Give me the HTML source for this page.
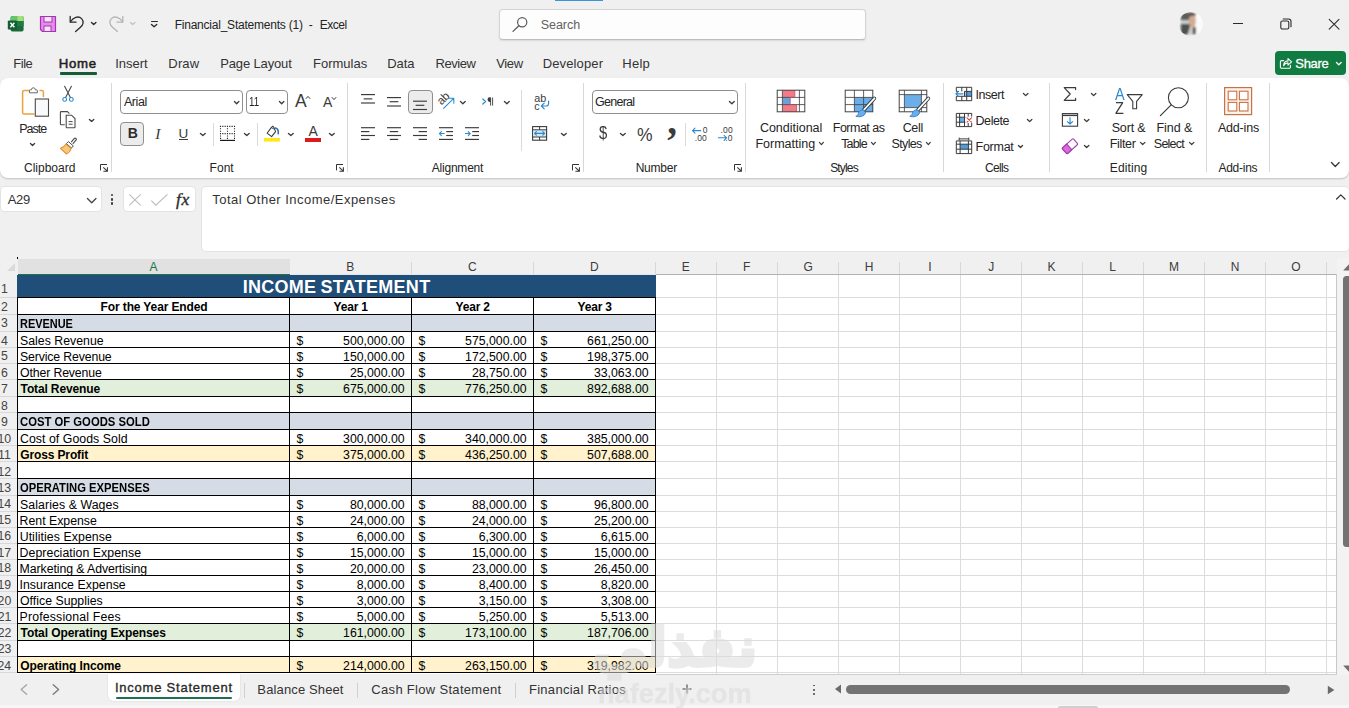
<!DOCTYPE html><html><head><meta charset="utf-8"><title>Financial_Statements (1) - Excel</title><style>
*{box-sizing:border-box;margin:0;padding:0}
html,body{width:1349px;height:708px;overflow:hidden;background:#f0f0f0;font-family:"Liberation Sans",sans-serif;color:#242424}
body{position:relative}
.abs{position:absolute}
.t{position:absolute;white-space:nowrap;line-height:1}
.ui{font-size:12px;color:#242424}
#ribbon{position:absolute;left:0;top:78px;width:1349px;height:99.5px;background:#fff;border-radius:8px;box-shadow:0 1px 2px rgba(0,0,0,.2)}
.sep{position:absolute;width:1px;background:#d6d6d6}
.cell{position:absolute;font-size:12.3px;line-height:1;white-space:nowrap;color:#000}
.b{font-weight:bold}
.hl{position:absolute;height:1px;background:#000}
.vl{position:absolute;width:1px;background:#000}
.gl{position:absolute;background:#dcdcdc}
.rh{position:absolute;font-size:13px;color:#3b3b3b;line-height:1;white-space:nowrap;text-align:center;width:30px;left:-9px}
.ch{position:absolute;font-size:12.5px;color:#3b3b3b;line-height:1;white-space:nowrap;text-align:center;top:260px}
</style></head><body>
<div class="abs" style="left:555px;top:0px;width:48px;height:1px;background:#3a96d6"></div>
<svg class="abs" style="left:7px;top:15px;" width="18" height="18" viewBox="0 0 18 18"><rect x="3.600" y="1" width="13" height="15.600" rx="1.800" fill="#1a6a3a"/><path d="M3.600 2.800A1.800 1.800 0 0 1 5.400 1H10.200V6H3.600Z" fill="#63c56c"/><path d="M10.200 1H14.800A1.800 1.800 0 0 1 16.600 2.800V6H10.200Z" fill="#a2e07c"/><rect x="10.200" y="6" width="6.400" height="5" fill="#1f7a43"/><rect x="0.800" y="5.400" width="9.200" height="9.200" rx="1.200" fill="#155d33"/><path d="M3.400 7.700L7.400 12.300M7.400 7.700L3.400 12.300" stroke="#fff" stroke-width="1.400" fill="none"/></svg>
<svg class="abs" style="left:39px;top:15px;" width="18" height="18" viewBox="0 0 18 18"><path d="M1.5 1.5H16.5V16.5H3.5L1.5 14.5Z" fill="#e58be8" stroke="#a334b4" stroke-width="1.2" stroke-linejoin="round"/><rect x="5" y="1.5" width="8" height="5.5" fill="#fbe4fb" stroke="#a334b4" stroke-width="1"/><rect x="5" y="11" width="7" height="5.5" fill="#fbe4fb" stroke="#a334b4" stroke-width="1"/></svg>
<svg class="abs" style="left:68px;top:14px;" width="18" height="20" viewBox="0 0 18 20"><path d="M2.2 2.5V8.2H8" fill="none" stroke="#2b2b2b" stroke-width="1.3" stroke-linecap="round" stroke-linejoin="round"/><path d="M2.6 7.8C5 3.2 10.5 1.5 13.6 4.6C16.4 7.6 15 11.2 12.2 13.6L7.6 17.6" fill="none" stroke="#2b2b2b" stroke-width="1.3" stroke-linecap="round"/></svg>
<svg class="abs" style="left:90.00px;top:20.80px" width="7.40" height="4.80"><path d="M1.49 1.49L3.70 3.51L5.91 1.49" fill="none" stroke="#2b2b2b" stroke-width="1.4" stroke-linecap="round" stroke-linejoin="round"/></svg>
<svg class="abs" style="left:107px;top:14px;" width="18" height="20" viewBox="0 0 18 20"><path d="M15.8 2.5V8.2H10" fill="none" stroke="#b4b4b4" stroke-width="1.3" stroke-linecap="round" stroke-linejoin="round"/><path d="M15.4 7.8C13 3.2 7.5 1.5 4.4 4.6C1.6 7.6 3 11.2 5.800 13.6L10.4 17.6" fill="none" stroke="#b4b4b4" stroke-width="1.3" stroke-linecap="round"/></svg>
<svg class="abs" style="left:129.00px;top:20.80px" width="7.40" height="4.80"><path d="M1.49 1.49L3.70 3.51L5.91 1.49" fill="none" stroke="#c4c4c4" stroke-width="1.4" stroke-linecap="round" stroke-linejoin="round"/></svg>
<div class="abs" style="left:151px;top:20.6px;width:7px;height:1.2999999999999972px;background:#2b2b2b;border-radius:1px"></div>
<svg class="abs" style="left:150.40px;top:22.60px" width="8.20" height="5.00"><path d="M1.49 1.49L4.10 3.71L6.71 1.49" fill="none" stroke="#2b2b2b" stroke-width="1.4" stroke-linecap="round" stroke-linejoin="round"/></svg>
<div class="t" style="left:174.64px;top:19.00px;font-size:12px;letter-spacing:-0.220px;color:#242424;">Financial_Statements (1)</div>
<div class="t" style="left:308.72px;top:19.00px;font-size:12px;letter-spacing:0.000px;color:#242424;">-</div>
<div class="t" style="left:319.64px;top:19.00px;font-size:12px;letter-spacing:-0.440px;color:#242424;">Excel</div>
<div class="abs" style="left:498.8px;top:9px;width:367.7px;height:30.5px;background:#fdfdfd;border:1px solid #d4d4d4;border-bottom-color:#bdbdbd;border-radius:4px;box-shadow:0 1px 2px rgba(0,0,0,.10)"></div>
<svg class="abs" style="left:511px;top:16px;" width="18" height="17" viewBox="0 0 18 17"><circle cx="11.2" cy="6.3" r="4.6" fill="none" stroke="#5a5a5a" stroke-width="1.2"/><path d="M7.9 9.7L2 15.4" stroke="#5a5a5a" stroke-width="1.3" stroke-linecap="round"/></svg>
<div class="t" style="left:540.84px;top:19.00px;font-size:12.5px;letter-spacing:-0.070px;color:#616161;">Search</div>
<svg class="abs" style="left:1178px;top:11px;" width="26" height="26" viewBox="0 0 26 26"><defs><clipPath id="avc"><circle cx="12.700" cy="13" r="12"/></clipPath><filter id="avb" x="-20%" y="-20%" width="140%" height="140%"><feGaussianBlur stdDeviation="1.100"/></filter></defs><circle cx="12.700" cy="13" r="12" fill="#fafafa"/><g clip-path="url(#avc)"><g filter="url(#avb)"><rect x="2" y="1" width="16" height="24" fill="#f4f4f2"/><rect x="2.600" y="1.400" width="12.400" height="8.400" fill="#5c5b58"/><rect x="2.600" y="9.400" width="8.600" height="3.800" fill="#d3d8d4"/><rect x="2.600" y="12.800" width="9.600" height="11.200" fill="#4b514d"/><ellipse cx="14.400" cy="10" rx="3.600" ry="6.400" fill="#d2aa92"/><rect x="11.600" y="2" width="6.200" height="2.600" fill="#3e3632"/><path d="M9.400 24L11.600 17.400L15.400 16.400L15.800 24Z" fill="#d2d2ce"/><rect x="14.800" y="16" width="3.200" height="7.400" fill="#3d3a36"/><rect x="17.800" y="0" width="8" height="26" fill="#fbfbfb"/></g></g></svg>
<div class="abs" style="left:1233px;top:22.5px;width:10px;height:1.1999999999999993px;background:#2b2b2b"></div>
<svg class="abs" style="left:1279px;top:17px;" width="14" height="14" viewBox="0 0 14 14"><rect x="1.8" y="4" width="8" height="8" rx="1.6" fill="none" stroke="#2b2b2b" stroke-width="1.1"/><path d="M4.2 2H9.6A2.4 2.4 0 0 1 12 4.400V9.800" fill="none" stroke="#2b2b2b" stroke-width="1.1" stroke-linecap="round"/></svg>
<svg class="abs" style="left:1327px;top:17px;" width="14" height="14" viewBox="0 0 14 14"><path d="M2.200 2.300L12 12.100M12 2.300L2.200 12.100" stroke="#2b2b2b" stroke-width="1.050" stroke-linecap="round"/></svg>
<div class="t" style="left:13.36px;top:57.00px;font-size:13px;letter-spacing:-0.490px;color:#333;">File</div>
<div class="t" style="left:115.23px;top:57.00px;font-size:13px;letter-spacing:-0.006px;color:#333;">Insert</div>
<div class="t" style="left:168.36px;top:57.00px;font-size:13px;letter-spacing:0.128px;color:#333;">Draw</div>
<div class="t" style="left:220.26px;top:57.00px;font-size:13px;letter-spacing:-0.145px;color:#333;">Page Layout</div>
<div class="t" style="left:313.06px;top:57.00px;font-size:13px;letter-spacing:-0.002px;color:#333;">Formulas</div>
<div class="t" style="left:387.16px;top:57.00px;font-size:13px;letter-spacing:-0.018px;color:#333;">Data</div>
<div class="t" style="left:435.56px;top:57.00px;font-size:13px;letter-spacing:-0.440px;color:#333;">Review</div>
<div class="t" style="left:496.30px;top:57.00px;font-size:13px;letter-spacing:-0.383px;color:#333;">View</div>
<div class="t" style="left:542.66px;top:57.00px;font-size:13px;letter-spacing:0.132px;color:#333;">Developer</div>
<div class="t" style="left:622.36px;top:57.00px;font-size:13px;letter-spacing:0.248px;color:#333;">Help</div>
<div class="t" style="left:58.84px;top:57.00px;font-size:13.2px;letter-spacing:0.702px;color:#1f1f1f;-webkit-text-stroke:0.55px #1f1f1f;">Home</div>
<div class="abs" style="left:59.5px;top:72.4px;width:37.0px;height:2.1999999999999886px;background:#185c37;border-radius:1px"></div>
<div class="abs" style="left:1275px;top:51px;width:71px;height:24px;background:#107c41;border-radius:4px"></div>
<svg class="abs" style="left:1279px;top:56px;" width="14" height="14" viewBox="0 0 14 14"><path d="M4.6 4.6H2.6A1.2 1.2 0 0 0 1.400 5.800V11A1.2 1.2 0 0 0 2.600 12.200H10.2A1.2 1.2 0 0 0 11.400 11V9.400" fill="none" stroke="#fff" stroke-width="1.1" stroke-linecap="round"/><path d="M4.6 9.6C4.800 6.600 6.600 5 9.000 4.900V2.600L12.600 5.900L9.000 9.200V6.900C7.200 6.900 5.800 7.700 4.600 9.600Z" fill="none" stroke="#fff" stroke-width="1.1" stroke-linejoin="round"/></svg>
<div class="t" style="left:1295.32px;top:57.00px;font-size:13px;letter-spacing:-0.335px;color:#fff;-webkit-text-stroke:0.3px #fff;">Share</div>
<svg class="abs" style="left:1334.80px;top:60.80px" width="7.60" height="5.00"><path d="M1.46 1.46L3.80 3.73L6.15 1.46" fill="none" stroke="#fff" stroke-width="1.3" stroke-linecap="round" stroke-linejoin="round"/></svg>
<div id="ribbon"></div>
<div class="abs" style="left:111.3px;top:83px;width:1.0px;height:89px;background:#d8d8d8"></div>
<div class="abs" style="left:347.0px;top:83px;width:1.0px;height:89px;background:#d8d8d8"></div>
<div class="abs" style="left:582.8px;top:83px;width:1.0px;height:89px;background:#d8d8d8"></div>
<div class="abs" style="left:745.2px;top:83px;width:1.0px;height:89px;background:#d8d8d8"></div>
<div class="abs" style="left:942.8px;top:83px;width:1.0px;height:89px;background:#d8d8d8"></div>
<div class="abs" style="left:1048.9px;top:83px;width:1.0px;height:89px;background:#d8d8d8"></div>
<div class="abs" style="left:1206.0px;top:83px;width:1.0px;height:89px;background:#d8d8d8"></div>
<div class="abs" style="left:1269.0px;top:83px;width:1.0px;height:89px;background:#d8d8d8"></div>
<svg class="abs" style="left:20px;top:86px;" width="32" height="34" viewBox="0 0 32 34"><path d="M10 4.600H4.200A1.600 1.600 0 0 0 2.600 6.200V26.400A1.600 1.600 0 0 0 4.200 28H14.500" fill="none" stroke="#e8a33d" stroke-width="1.5"/><path d="M19.500 4.600H21.800A1.600 1.600 0 0 1 23.400 6.200V11" fill="none" stroke="#e8a33d" stroke-width="1.5"/><path d="M9.400 6.800V4.800A1 1 0 0 1 10.400 3.800H11.400A2 2 0 0 1 15.400 3.800H16.400A1 1 0 0 1 17.400 4.800V6.800Z" fill="#fff" stroke="#6a6a6a" stroke-width="1"/><rect x="15.300" y="13" width="13.200" height="17.200" fill="#fafafa" stroke="#4a4a4a" stroke-width="1.1"/></svg>
<div class="t" style="left:19.30px;top:123.00px;font-size:12.5px;letter-spacing:-1.034px;color:#242424;">Paste</div>
<svg class="abs" style="left:29.20px;top:142.20px" width="7.00" height="4.80"><path d="M1.46 1.46L3.50 3.53L5.55 1.46" fill="none" stroke="#3b3b3b" stroke-width="1.3" stroke-linecap="round" stroke-linejoin="round"/></svg>
<svg class="abs" style="left:61px;top:85px;" width="14" height="18" viewBox="0 0 14 18"><path d="M3.600 1.200L9.400 12.500M10.400 1.200L4.600 12.500" stroke="#4a4a4a" stroke-width="1.1" stroke-linecap="round"/><circle cx="3.700" cy="14.400" r="1.900" fill="none" stroke="#2a8ad0" stroke-width="1.1"/><circle cx="10.300" cy="14.400" r="1.900" fill="none" stroke="#2a8ad0" stroke-width="1.1"/></svg>
<svg class="abs" style="left:59px;top:110px;" width="18" height="19" viewBox="0 0 18 19"><path d="M5.800 14.800H2.200A0.800 0.800 0 0 1 1.400 14V2.400A0.800 0.800 0 0 1 2.200 1.600H8.400L10.400 3.600" fill="none" stroke="#4a4a4a" stroke-width="1.1"/><path d="M7.200 5.200H12.600L16 8.600V17A0.800 0.800 0 0 1 15.200 17.800H8A0.800 0.800 0 0 1 7.200 17Z" fill="#fff" stroke="#4a4a4a" stroke-width="1.1"/><path d="M9.600 11.600H13.600M9.600 14.200H13.600" stroke="#4a4a4a" stroke-width="1"/></svg>
<svg class="abs" style="left:87.60px;top:117.60px" width="7.20" height="4.80"><path d="M1.46 1.46L3.60 3.53L5.75 1.46" fill="none" stroke="#3b3b3b" stroke-width="1.3" stroke-linecap="round" stroke-linejoin="round"/></svg>
<svg class="abs" style="left:59px;top:137px;" width="18" height="18" viewBox="0 0 18 18"><path d="M12.200 5.200L15.200 1.600A1.200 1.200 0 0 1 17 3.200L13.800 6.800" fill="#fff" stroke="#4a4a4a" stroke-width="1.1"/><path d="M9.400 4.600L14.400 9L12.400 11L7.400 6.600Z" fill="#fff" stroke="#4a4a4a" stroke-width="1"/><path d="M7 7L12.200 11.600C11.400 14 9.800 16 7.600 17L1.400 11.400C3.600 10.800 5.600 9.400 7 7Z" fill="#f7c77e" stroke="#e0922f" stroke-width="1.1" stroke-linejoin="round"/></svg>
<div class="t" style="left:24.00px;top:162.00px;font-size:12px;letter-spacing:-0.005px;color:#242424;">Clipboard</div>
<svg class="abs" style="left:98.8px;top:163.2px;" width="10" height="10" viewBox="0 0 10 10"><path d="M1.500 7.400V1.500H8" fill="none" stroke="#333" stroke-width="1"/><path d="M4.300 4.300L8.300 8.100M8.400 4.200V8.200H4.400" fill="none" stroke="#333" stroke-width="1.050"/></svg>
<div class="abs" style="left:120px;top:90px;width:123px;height:24px;border:1px solid #8f8f8f;border-radius:4px;background:#fff"></div>
<div class="t" style="left:123.90px;top:96.00px;font-size:12.5px;letter-spacing:-0.413px;color:#242424;">Arial</div>
<svg class="abs" style="left:232.70px;top:99.90px" width="7.30" height="5.00"><path d="M1.46 1.46L3.65 3.73L5.85 1.46" fill="none" stroke="#3b3b3b" stroke-width="1.3" stroke-linecap="round" stroke-linejoin="round"/></svg>
<div class="abs" style="left:245.5px;top:90px;width:42.0px;height:24px;border:1px solid #8f8f8f;border-radius:4px;background:#fff"></div>
<div class="t" style="left:249.17px;top:96.00px;font-size:12.5px;color:#242424;transform:scaleX(0.7781);transform-origin:0 0;">11</div>
<svg class="abs" style="left:277.50px;top:99.90px" width="7.30" height="5.00"><path d="M1.46 1.46L3.65 3.73L5.85 1.46" fill="none" stroke="#3b3b3b" stroke-width="1.3" stroke-linecap="round" stroke-linejoin="round"/></svg>
<div class="t" style="left:295.00px;top:93.00px;font-size:17.5px;letter-spacing:0.000px;color:#3b3b3b;">A</div>
<svg class="abs" style="left:305px;top:94.6px;" width="6" height="5" viewBox="0 0 6 5"><path d="M0.800 3.800L3 1.400L5.200 3.800" fill="none" stroke="#3b3b3b" stroke-width="1"/></svg>
<div class="t" style="left:323.00px;top:95.00px;font-size:14px;letter-spacing:0.000px;color:#3b3b3b;">A</div>
<svg class="abs" style="left:331px;top:96px;" width="6" height="5" viewBox="0 0 6 5"><path d="M0.800 1.200L3 3.600L5.200 1.200" fill="none" stroke="#3b3b3b" stroke-width="1"/></svg>
<div class="abs" style="left:120px;top:122px;width:24px;height:24px;border:1px solid #8f8f8f;border-radius:4px;background:#ececec"></div>
<div class="t" style="left:127.79px;top:126.00px;font-size:14px;font-weight:bold;letter-spacing:0.000px;color:#2b2b2b;">B</div>
<div class="t" style="left:155.2px;top:126px;font-family:'Liberation Serif',serif;font-style:italic;font-size:15.5px;color:#3b3b3b">I</div>
<div class="t" style="left:178.59px;top:127.00px;font-size:13.5px;letter-spacing:0.000px;color:#3b3b3b;">U</div>
<div class="abs" style="left:179.2px;top:138.8px;width:8.800000000000011px;height:1.1999999999999886px;background:#3b3b3b"></div>
<svg class="abs" style="left:198.50px;top:131.80px" width="7.70" height="4.80"><path d="M1.46 1.46L3.85 3.53L6.24 1.46" fill="none" stroke="#3b3b3b" stroke-width="1.3" stroke-linecap="round" stroke-linejoin="round"/></svg>
<div class="abs" style="left:213.1px;top:123px;width:1.0px;height:22.5px;background:#dadada"></div>
<svg class="abs" style="left:219px;top:124px;" width="18" height="18" viewBox="0 0 18 18"><path d="M0.95 1.85h1.100v1.100h-1.100zM0.95 4.25h1.100v1.100h-1.100zM0.95 6.65h1.100v1.100h-1.100zM0.95 9.05h1.100v1.100h-1.100zM0.95 11.45h1.100v1.100h-1.100zM0.95 13.85h1.100v1.100h-1.100zM3.28 1.85h1.100v1.100h-1.100zM3.28 9.05h1.100v1.100h-1.100zM5.61 1.85h1.100v1.100h-1.100zM5.61 9.05h1.100v1.100h-1.100zM7.94 1.85h1.100v1.100h-1.100zM7.94 4.25h1.100v1.100h-1.100zM7.94 6.65h1.100v1.100h-1.100zM7.94 9.05h1.100v1.100h-1.100zM7.94 11.45h1.100v1.100h-1.100zM7.94 13.85h1.100v1.100h-1.100zM10.27 1.85h1.100v1.100h-1.100zM10.27 9.05h1.100v1.100h-1.100zM12.60 1.85h1.100v1.100h-1.100zM12.60 9.05h1.100v1.100h-1.100zM14.93 1.85h1.100v1.100h-1.100zM14.93 4.25h1.100v1.100h-1.100zM14.93 6.65h1.100v1.100h-1.100zM14.93 9.05h1.100v1.100h-1.100zM14.93 11.45h1.100v1.100h-1.100zM14.93 13.85h1.100v1.100h-1.100z" fill="#222"/><path d="M1 16.400H16" stroke="#1a1a1a" stroke-width="1.200"/></svg>
<svg class="abs" style="left:242.50px;top:131.80px" width="7.60" height="4.80"><path d="M1.46 1.46L3.80 3.53L6.14 1.46" fill="none" stroke="#3b3b3b" stroke-width="1.3" stroke-linecap="round" stroke-linejoin="round"/></svg>
<div class="abs" style="left:256.8px;top:123px;width:1.0px;height:22.5px;background:#dadada"></div>
<svg class="abs" style="left:263px;top:123px;" width="18" height="20" viewBox="0 0 18 20"><path d="M4.100 10.200L8.200 4.600L9.800 3.200L11 4.600L12.600 8.600L8.600 13.600Z" fill="#fff" stroke="#3b3b3b" stroke-width="1.050" stroke-linejoin="round"/><path d="M8.200 4.600L11.600 6.400" fill="none" stroke="#3b3b3b" stroke-width="0.900"/><path d="M12.400 5C14.600 5.400 15.600 7.800 15.200 10.800" fill="none" stroke="#2a6fb0" stroke-width="1.500" stroke-linecap="round"/><rect x="0.900" y="15" width="16" height="3.600" fill="#ffe81a"/></svg>
<svg class="abs" style="left:286.60px;top:131.80px" width="7.70" height="4.80"><path d="M1.46 1.46L3.85 3.53L6.24 1.46" fill="none" stroke="#3b3b3b" stroke-width="1.3" stroke-linecap="round" stroke-linejoin="round"/></svg>
<div class="t" style="left:308.40px;top:124.00px;font-size:14px;letter-spacing:0.000px;color:#3b3b3b;">A</div>
<div class="abs" style="left:305.2px;top:138px;width:15.800000000000011px;height:3.5999999999999943px;background:#e0191d"></div>
<svg class="abs" style="left:327.50px;top:131.80px" width="7.70" height="4.80"><path d="M1.46 1.46L3.85 3.53L6.24 1.46" fill="none" stroke="#3b3b3b" stroke-width="1.3" stroke-linecap="round" stroke-linejoin="round"/></svg>
<div class="t" style="left:209.54px;top:162.00px;font-size:12px;letter-spacing:0.053px;color:#242424;">Font</div>
<svg class="abs" style="left:334.9px;top:163.2px;" width="10" height="10" viewBox="0 0 10 10"><path d="M1.500 7.400V1.500H8" fill="none" stroke="#333" stroke-width="1"/><path d="M4.300 4.300L8.300 8.100M8.400 4.200V8.200H4.400" fill="none" stroke="#333" stroke-width="1.050"/></svg>
<svg class="abs" style="left:360px;top:88px;" width="16" height="56" viewBox="0 0 16 56"><path d="M1.00 6.60H15.00" stroke="#3b3b3b" stroke-width="1.15"/><path d="M3.66 10.90H12.34" stroke="#3b3b3b" stroke-width="1.15"/><path d="M1.00 15.00H15.00" stroke="#3b3b3b" stroke-width="1.15"/></svg>
<svg class="abs" style="left:386px;top:88px;" width="16" height="56" viewBox="0 0 16 56"><path d="M1.00 9.60H15.00" stroke="#3b3b3b" stroke-width="1.15"/><path d="M3.66 13.70H12.34" stroke="#3b3b3b" stroke-width="1.15"/><path d="M1.00 18.00H15.00" stroke="#3b3b3b" stroke-width="1.15"/></svg>
<div class="abs" style="left:408px;top:90px;width:24.5px;height:24px;border:1px solid #8f8f8f;border-radius:4px;background:#ececec"></div>
<svg class="abs" style="left:412px;top:88px;" width="16" height="56" viewBox="0 0 16 56"><path d="M1.00 13.20H15.00" stroke="#3b3b3b" stroke-width="1.15"/><path d="M3.66 17.30H12.34" stroke="#3b3b3b" stroke-width="1.15"/><path d="M1.00 21.50H15.00" stroke="#3b3b3b" stroke-width="1.15"/></svg>
<svg class="abs" style="left:436px;top:91px;" width="20" height="20" viewBox="0 0 20 20"><text x="0" y="0" font-size="11.600" fill="#3b3b3b" font-family="Liberation Sans" letter-spacing="-0.3" transform="translate(5.400 14.600) rotate(-45)">ab</text><path d="M7.600 17.400L17.200 7.800M12.800 7.200H17.800V12.200" fill="none" stroke="#2a8ad0" stroke-width="1.050" stroke-linecap="round" stroke-linejoin="round"/></svg>
<svg class="abs" style="left:458.80px;top:99.90px" width="7.70" height="5.00"><path d="M1.46 1.46L3.85 3.73L6.24 1.46" fill="none" stroke="#3b3b3b" stroke-width="1.3" stroke-linecap="round" stroke-linejoin="round"/></svg>
<svg class="abs" style="left:481px;top:96px;" width="14" height="11" viewBox="0 0 14 11"><path d="M1.800 3L4.600 5.500L1.800 8" fill="none" stroke="#2a8ad0" stroke-width="1.2" stroke-linecap="round" stroke-linejoin="round"/><path d="M9.600 1.600V9.600M11.600 1.600V9.600" fill="none" stroke="#3b3b3b" stroke-width="0.9"/><path d="M12.800 1.300H8.800A2.300 2.300 0 0 0 8.800 5.900H9.600V1.300" fill="#3b3b3b"/></svg>
<svg class="abs" style="left:502.70px;top:99.90px" width="7.70" height="5.00"><path d="M1.46 1.46L3.85 3.73L6.24 1.46" fill="none" stroke="#3b3b3b" stroke-width="1.3" stroke-linecap="round" stroke-linejoin="round"/></svg>
<div class="abs" style="left:521px;top:90px;width:1px;height:60.5px;background:#dadada"></div>
<div class="t" style="left:534.2px;top:92.6px;font-size:10.8px;color:#3b3b3b;letter-spacing:0px">ab</div>
<div class="t" style="left:534.2px;top:100.8px;font-size:10.8px;color:#3b3b3b">c</div>
<svg class="abs" style="left:539.6px;top:100.4px;" width="10" height="11" viewBox="0 0 10 11"><path d="M8.600 1.200V3.600A2.400 2.400 0 0 1 6.200 6H1.600M4.200 3.200L1.400 6L4.200 8.800" fill="none" stroke="#2a8ad0" stroke-width="1.2" stroke-linecap="round" stroke-linejoin="round"/></svg>
<svg class="abs" style="left:360px;top:88px;" width="16" height="56" viewBox="0 0 16 56"><path d="M1.00 39.70H15.00" stroke="#3b3b3b" stroke-width="1.15"/><path d="M1.00 43.60H9.40" stroke="#3b3b3b" stroke-width="1.15"/><path d="M1.00 47.50H15.00" stroke="#3b3b3b" stroke-width="1.15"/><path d="M1.00 51.40H9.40" stroke="#3b3b3b" stroke-width="1.15"/></svg>
<svg class="abs" style="left:386px;top:88px;" width="16" height="56" viewBox="0 0 16 56"><path d="M1.00 39.70H15.00" stroke="#3b3b3b" stroke-width="1.15"/><path d="M3.80 43.60H12.20" stroke="#3b3b3b" stroke-width="1.15"/><path d="M1.00 47.50H15.00" stroke="#3b3b3b" stroke-width="1.15"/><path d="M3.80 51.40H12.20" stroke="#3b3b3b" stroke-width="1.15"/></svg>
<svg class="abs" style="left:412.2px;top:88px;" width="16" height="56" viewBox="0 0 16 56"><path d="M1.00 39.70H15.00" stroke="#3b3b3b" stroke-width="1.15"/><path d="M6.60 43.60H15.00" stroke="#3b3b3b" stroke-width="1.15"/><path d="M1.00 47.50H15.00" stroke="#3b3b3b" stroke-width="1.15"/><path d="M6.60 51.40H15.00" stroke="#3b3b3b" stroke-width="1.15"/></svg>
<svg class="abs" style="left:438px;top:88px;" width="16" height="56" viewBox="0 0 16 56"><path d="M1.00 39.70H15.00" stroke="#3b3b3b" stroke-width="1.15"/><path d="M1.00 51.40H15.00" stroke="#3b3b3b" stroke-width="1.15"/><path d="M8.20 43.60H15.00" stroke="#3b3b3b" stroke-width="1.15"/><path d="M8.20 47.50H15.00" stroke="#3b3b3b" stroke-width="1.15"/><path d="M6.200 45.55000000000001H1.400M3.400 43.55000000000001L1.400 45.55000000000001L3.400 47.55000000000001" fill="none" stroke="#2a8ad0" stroke-width="1.100" stroke-linecap="round" stroke-linejoin="round"/></svg>
<svg class="abs" style="left:464.2px;top:88px;" width="16" height="56" viewBox="0 0 16 56"><path d="M1.00 39.70H15.00" stroke="#3b3b3b" stroke-width="1.15"/><path d="M1.00 51.40H15.00" stroke="#3b3b3b" stroke-width="1.15"/><path d="M8.20 43.60H15.00" stroke="#3b3b3b" stroke-width="1.15"/><path d="M8.20 47.50H15.00" stroke="#3b3b3b" stroke-width="1.15"/><path d="M1.400 45.55000000000001H6.200M4.200 43.55000000000001L6.200 45.55000000000001L4.200 47.55000000000001" fill="none" stroke="#2a8ad0" stroke-width="1.100" stroke-linecap="round" stroke-linejoin="round"/></svg>
<svg class="abs" style="left:531px;top:125px;" width="18" height="17" viewBox="0 0 18 17"><rect x="1.600" y="1.600" width="14" height="13.600" fill="none" stroke="#3b3b3b" stroke-width="1.100"/><rect x="2.200" y="5" width="12.800" height="6.800" fill="#d3e9f8"/><path d="M1.600 4.800H15.600M1.600 12H15.600M8.600 1.600V4.800M8.600 12V15.200" stroke="#3b3b3b" stroke-width="1"/><path d="M3.600 8.400H13.600M5.400 6.600L3.600 8.400L5.400 10.200M11.800 6.600L13.600 8.400L11.800 10.200" fill="none" stroke="#2a8ad0" stroke-width="1.100" stroke-linecap="round" stroke-linejoin="round"/></svg>
<svg class="abs" style="left:559.70px;top:131.80px" width="7.70" height="4.80"><path d="M1.46 1.46L3.85 3.53L6.24 1.46" fill="none" stroke="#3b3b3b" stroke-width="1.3" stroke-linecap="round" stroke-linejoin="round"/></svg>
<div class="t" style="left:431.70px;top:162.00px;font-size:12px;letter-spacing:-0.205px;color:#242424;">Alignment</div>
<svg class="abs" style="left:570.8px;top:163.2px;" width="10" height="10" viewBox="0 0 10 10"><path d="M1.500 7.400V1.500H8" fill="none" stroke="#333" stroke-width="1"/><path d="M4.300 4.300L8.300 8.100M8.400 4.200V8.200H4.400" fill="none" stroke="#333" stroke-width="1.050"/></svg>
<div class="abs" style="left:592px;top:90px;width:146px;height:24px;border:1px solid #8f8f8f;border-radius:4px;background:#fff"></div>
<div class="t" style="left:595.08px;top:96.00px;font-size:12.5px;letter-spacing:-0.744px;color:#242424;">General</div>
<svg class="abs" style="left:727.60px;top:99.90px" width="7.70" height="5.00"><path d="M1.46 1.46L3.85 3.73L6.24 1.46" fill="none" stroke="#3b3b3b" stroke-width="1.3" stroke-linecap="round" stroke-linejoin="round"/></svg>
<div class="t" style="left:598.9px;top:124.4px;font-size:18.5px;color:#3b3b3b;transform:scaleX(.8);transform-origin:0 0">$</div>
<svg class="abs" style="left:618.50px;top:131.80px" width="7.70" height="4.80"><path d="M1.46 1.46L3.85 3.53L6.25 1.46" fill="none" stroke="#3b3b3b" stroke-width="1.3" stroke-linecap="round" stroke-linejoin="round"/></svg>
<div class="t" style="left:636.89px;top:127.00px;font-size:17.5px;letter-spacing:0.000px;color:#3b3b3b;">%</div>
<div class="t" style="left:667.2px;top:100.9px;font-family:'Liberation Serif',serif;font-weight:bold;font-size:39px;color:#3b3b3b">,</div>
<div class="abs" style="left:685.2px;top:123px;width:1.0px;height:22.5px;background:#dadada"></div>
<svg class="abs" style="left:691px;top:125px;" width="12" height="12" viewBox="0 0 12 12"><path d="M1.500 5.600H9.800M4 3.100L1.500 5.600L4 8.100" fill="none" stroke="#2a8ad0" stroke-width="1.100" stroke-linecap="round" stroke-linejoin="round"/></svg>
<div class="t" style="left:702.700px;top:125.500px;font-size:8.500px;color:#3b3b3b">0</div>
<div class="t" style="left:694.800px;top:134.100px;font-size:8.500px;color:#3b3b3b;letter-spacing:0.100px">.00</div>
<div class="t" style="left:720.600px;top:125.500px;font-size:8.500px;color:#3b3b3b;letter-spacing:0.100px">.00</div>
<svg class="abs" style="left:717px;top:132px;" width="12" height="12" viewBox="0 0 12 12"><path d="M1.300 5.800H9.600M7.100 3.300L9.600 5.800L7.100 8.300" fill="none" stroke="#2a8ad0" stroke-width="1.100" stroke-linecap="round" stroke-linejoin="round"/></svg>
<div class="t" style="left:725.300px;top:134.100px;font-size:8.500px;color:#3b3b3b;letter-spacing:0.100px">.0</div>
<div class="t" style="left:635.64px;top:162.00px;font-size:12px;letter-spacing:-0.236px;color:#242424;">Number</div>
<svg class="abs" style="left:732.9px;top:163.2px;" width="10" height="10" viewBox="0 0 10 10"><path d="M1.500 7.400V1.500H8" fill="none" stroke="#333" stroke-width="1"/><path d="M4.300 4.300L8.300 8.100M8.400 4.200V8.200H4.400" fill="none" stroke="#333" stroke-width="1.050"/></svg>
<svg class="abs" style="left:776px;top:89px;" width="31" height="24" viewBox="0 0 31 24"><rect x="1.200" y="1.200" width="27.600" height="21.600" fill="#fff"/><rect x="6.600" y="1.200" width="12.200" height="7.200" fill="#f57a87"/><rect x="6.600" y="8.400" width="7.600" height="7.200" fill="#6aa0e0"/><rect x="6.600" y="15.600" width="14" height="7.200" fill="#f57a87"/><path d="M1.200 8.400H28.800M1.200 15.600H28.800M6.400 1.200V22.800M23.400 1.200V22.800" stroke="#444" stroke-width="0.85"/><path d="M18.800 1.200V8.400M14.200 8.400V15.600M20.600 15.600V22.800" stroke="#d45564" stroke-width="0.9"/><rect x="1.200" y="1.200" width="27.600" height="21.600" fill="none" stroke="#3b3b3b" stroke-width="0.95"/></svg>
<div class="t" style="left:759.88px;top:122.00px;font-size:12.5px;letter-spacing:-0.013px;color:#242424;">Conditional</div>
<div class="t" style="left:755.50px;top:138.00px;font-size:12.5px;letter-spacing:-0.011px;color:#242424;">Formatting</div>
<svg class="abs" style="left:818.20px;top:140.80px" width="6.80" height="4.80"><path d="M1.42 1.42L3.40 3.55L5.38 1.42" fill="none" stroke="#3b3b3b" stroke-width="1.2" stroke-linecap="round" stroke-linejoin="round"/></svg>
<svg class="abs" style="left:844px;top:89px;" width="33" height="29" viewBox="0 0 33 29"><rect x="1.200" y="1.200" width="27.600" height="21.600" fill="#fff"/><rect x="10.400" y="8.400" width="18.400" height="14.400" fill="#6aaeea"/><path d="M1.200 8.400H28.800M1.200 15.600H28.800M10.400 1.200V22.800M19.600 1.200V22.800" stroke="#444" stroke-width="0.85"/><rect x="1.200" y="1.200" width="27.600" height="21.600" fill="none" stroke="#3b3b3b" stroke-width="0.95"/><path d="M30.4 9.3L19.8 21" stroke="#3b3b3b" stroke-width="3.600" stroke-linecap="round"/><path d="M30.4 9.3L19.8 21" stroke="#fff" stroke-width="1.800" stroke-linecap="round"/><path d="M19.8 21c-2.800 -0.600 -5 0.800 -5.400 3.400c-0.400 1.600 -1.400 2.400 -2.600 2.800c3.600 1.200 8.400 0.400 9.800 -3.400z" fill="#6aaeea" stroke="#2d7cc7" stroke-width="0.900"/></svg>
<div class="t" style="left:832.80px;top:122.00px;font-size:12.5px;letter-spacing:-0.514px;color:#242424;">Format as</div>
<div class="t" style="left:841.15px;top:138.00px;font-size:12.5px;letter-spacing:-0.831px;color:#242424;">Table</div>
<svg class="abs" style="left:870.30px;top:140.80px" width="6.80" height="4.80"><path d="M1.42 1.42L3.40 3.55L5.38 1.42" fill="none" stroke="#3b3b3b" stroke-width="1.2" stroke-linecap="round" stroke-linejoin="round"/></svg>
<svg class="abs" style="left:898px;top:89px;" width="33" height="29" viewBox="0 0 33 29"><rect x="1.200" y="1.200" width="27.600" height="21.600" fill="#fff"/><rect x="6.600" y="5.800" width="16.600" height="12.600" fill="#6aaeea"/><path d="M1.200 5.600H28.800M1.200 18.600H28.800M6.400 1.200V22.800M23.400 1.200V22.800" stroke="#444" stroke-width="0.85"/><rect x="1.200" y="1.200" width="27.600" height="21.600" fill="none" stroke="#3b3b3b" stroke-width="0.95"/><path d="M30.4 9.3L19.8 21" stroke="#3b3b3b" stroke-width="3.600" stroke-linecap="round"/><path d="M30.4 9.3L19.8 21" stroke="#fff" stroke-width="1.800" stroke-linecap="round"/><path d="M19.8 21c-2.800 -0.600 -5 0.800 -5.400 3.400c-0.400 1.600 -1.400 2.400 -2.600 2.800c3.600 1.200 8.400 0.400 9.800 -3.400z" fill="#6aaeea" stroke="#2d7cc7" stroke-width="0.900"/></svg>
<div class="t" style="left:902.67px;top:122.00px;font-size:12.5px;letter-spacing:-0.342px;color:#242424;">Cell</div>
<div class="t" style="left:891.54px;top:138.00px;font-size:12.5px;letter-spacing:-0.653px;color:#242424;">Styles</div>
<svg class="abs" style="left:925.00px;top:140.80px" width="6.70" height="4.80"><path d="M1.42 1.42L3.35 3.55L5.28 1.42" fill="none" stroke="#3b3b3b" stroke-width="1.2" stroke-linecap="round" stroke-linejoin="round"/></svg>
<div class="t" style="left:830.16px;top:162.00px;font-size:12px;letter-spacing:-0.828px;color:#242424;">Styles</div>
<svg class="abs" style="left:955px;top:86px;" width="19" height="16" viewBox="0 0 19 16"><rect x="1.300" y="1.300" width="15.400" height="13.400" fill="#fff"/><rect x="9.500" y="5.400" width="2.400" height="4.900" fill="#a6cdf0"/><rect x="11.700" y="5.400" width="5" height="4.900" fill="#4f9de0"/><path d="M1.300 5.400V1.300H16.700V14.700H1.300V10.300M6.800 1.300V5.400M11.700 1.300V14.700M6.800 10.300V14.700M1.300 5.400H4M9.500 5.400H16.700M1.300 10.300H16.700M9.500 5.400V10.300" fill="none" stroke="#3b3b3b" stroke-width="1"/><path d="M0.800 7.850H8M3.300 5.500L0.800 7.850L3.300 10.200" fill="none" stroke="#2a8ad0" stroke-width="1.100" stroke-linecap="round" stroke-linejoin="round"/></svg>
<div class="t" style="left:975.38px;top:89.00px;font-size:12.5px;letter-spacing:-0.445px;color:#242424;">Insert</div>
<svg class="abs" style="left:1021.70px;top:92.00px" width="7.40" height="4.90"><path d="M1.46 1.46L3.70 3.63L5.94 1.46" fill="none" stroke="#3b3b3b" stroke-width="1.3" stroke-linecap="round" stroke-linejoin="round"/></svg>
<svg class="abs" style="left:955px;top:112px;" width="19" height="16" viewBox="0 0 19 16"><rect x="1.300" y="1.400" width="15.400" height="13.200" fill="#fff"/><rect x="4.600" y="5.200" width="4.900" height="5" fill="#6aaee6"/><path d="M1.300 1.400H16.700M1.300 14.600H16.700M1.300 1.400V14.600M16.700 1.400V4.600M16.700 11V14.600M4.600 1.400V14.600M9.500 1.400V14.600M13.200 1.400V4.600M13.200 11V14.600M1.300 5.200H10.400M1.300 10.200H10.400" fill="none" stroke="#3b3b3b" stroke-width="1"/><path d="M12 5.800L16.500 10.200M16.500 5.800L12 10.200" stroke="#e0404a" stroke-width="1.050" stroke-linecap="round"/></svg>
<div class="t" style="left:975.50px;top:115.00px;font-size:12.5px;letter-spacing:-0.425px;color:#242424;">Delete</div>
<svg class="abs" style="left:1025.70px;top:117.90px" width="7.30" height="4.90"><path d="M1.46 1.46L3.65 3.63L5.84 1.46" fill="none" stroke="#3b3b3b" stroke-width="1.3" stroke-linecap="round" stroke-linejoin="round"/></svg>
<svg class="abs" style="left:955px;top:137px;" width="19" height="18" viewBox="0 0 19 18"><path d="M4.200 1.900H13.800M4.200 0.600V3.300M13.800 0.600V3.300" stroke="#3b3b3b" stroke-width="1"/><rect x="1.300" y="3.900" width="15.400" height="12.700" fill="#fff"/><rect x="5.100" y="7.200" width="8.300" height="5" fill="#4f9de0"/><path d="M1.300 3.900H16.700V16.600H1.300ZM5.100 3.900V16.600M13.400 3.900V16.600M1.300 7.200H16.700M1.300 12.200H16.700" fill="none" stroke="#3b3b3b" stroke-width="1"/></svg>
<div class="t" style="left:975.50px;top:141.00px;font-size:12.5px;letter-spacing:-0.253px;color:#242424;">Format</div>
<svg class="abs" style="left:1017.30px;top:143.80px" width="7.00" height="4.80"><path d="M1.46 1.46L3.50 3.53L5.54 1.46" fill="none" stroke="#3b3b3b" stroke-width="1.3" stroke-linecap="round" stroke-linejoin="round"/></svg>
<div class="t" style="left:985.10px;top:162.00px;font-size:12px;letter-spacing:-0.720px;color:#242424;">Cells</div>
<svg class="abs" style="left:1062px;top:86px;" width="16" height="16" viewBox="0 0 16 16"><path d="M13.600 3.600V1.600H2.200L8.200 8L2.200 14.400H13.600V12.400" fill="none" stroke="#3b3b3b" stroke-width="1.200" stroke-linejoin="round" stroke-linecap="round"/></svg>
<svg class="abs" style="left:1089.90px;top:92.00px" width="7.30" height="4.90"><path d="M1.46 1.46L3.65 3.63L5.84 1.46" fill="none" stroke="#3b3b3b" stroke-width="1.3" stroke-linecap="round" stroke-linejoin="round"/></svg>
<svg class="abs" style="left:1061px;top:112px;" width="18" height="16" viewBox="0 0 18 16"><rect x="1.400" y="1.600" width="15.200" height="12.600" fill="#fff" stroke="#3b3b3b" stroke-width="1.100"/><path d="M1.400 3.400H16.600" stroke="#3b3b3b" stroke-width="1.400"/><path d="M9 5.600V12M6.400 9.600L9 12L11.600 9.600" fill="none" stroke="#2a8ad0" stroke-width="1.100" stroke-linecap="round" stroke-linejoin="round"/></svg>
<svg class="abs" style="left:1082.80px;top:117.90px" width="7.30" height="4.90"><path d="M1.46 1.46L3.65 3.63L5.84 1.46" fill="none" stroke="#3b3b3b" stroke-width="1.3" stroke-linecap="round" stroke-linejoin="round"/></svg>
<svg class="abs" style="left:1061px;top:137px;" width="18" height="18" viewBox="0 0 18 18"><g transform="translate(9 9.200) rotate(-42)"><rect x="-7.400" y="-3.800" width="14.800" height="7.600" rx="1" fill="#fff" stroke="#a33bb4" stroke-width="1.100"/><path d="M-7.400 -2.800A1 1 0 0 1 -6.400 -3.800H-1V3.800H-6.400A1 1 0 0 1 -7.400 2.800Z" fill="#d96ad8" stroke="#a33bb4" stroke-width="1.100"/></g></svg>
<svg class="abs" style="left:1082.80px;top:143.80px" width="7.30" height="4.80"><path d="M1.46 1.46L3.65 3.53L5.84 1.46" fill="none" stroke="#3b3b3b" stroke-width="1.3" stroke-linecap="round" stroke-linejoin="round"/></svg>
<div class="t" style="left:1115px;top:86px;font-size:16.5px;color:#2a8ad0;transform:scaleX(.88);transform-origin:0 0">A</div>
<div class="t" style="left:1115.2px;top:100px;font-size:16.5px;color:#3b3b3b;transform:scaleX(.88);transform-origin:0 0">Z</div>
<svg class="abs" style="left:1126px;top:93px;" width="18" height="18" viewBox="0 0 18 18"><path d="M1.200 1.600H16.200L10.600 8.400V15.800H6.800V8.400Z" fill="#fff" stroke="#3b3b3b" stroke-width="1.100" stroke-linejoin="round"/></svg>
<div class="t" style="left:1111.64px;top:122.00px;font-size:12.5px;letter-spacing:-0.140px;color:#242424;">Sort &amp;</div>
<div class="t" style="left:1109.80px;top:138.00px;font-size:12.5px;letter-spacing:-0.345px;color:#242424;">Filter</div>
<svg class="abs" style="left:1138.60px;top:140.80px" width="7.40" height="4.80"><path d="M1.42 1.42L3.70 3.55L5.98 1.42" fill="none" stroke="#3b3b3b" stroke-width="1.2" stroke-linecap="round" stroke-linejoin="round"/></svg>
<svg class="abs" style="left:1158px;top:86px;" width="34" height="32" viewBox="0 0 34 32"><circle cx="20.400" cy="11.700" r="10" fill="#fff" stroke="#3b3b3b" stroke-width="1.100"/><path d="M13.200 18.800L2.400 29.600" stroke="#3b3b3b" stroke-width="1.200" stroke-linecap="round"/></svg>
<div class="t" style="left:1156.40px;top:122.00px;font-size:12.5px;letter-spacing:-0.020px;color:#242424;">Find &amp;</div>
<div class="t" style="left:1153.84px;top:138.00px;font-size:12.5px;letter-spacing:-0.785px;color:#242424;">Select</div>
<svg class="abs" style="left:1187.70px;top:140.80px" width="7.30" height="4.80"><path d="M1.42 1.42L3.65 3.55L5.88 1.42" fill="none" stroke="#3b3b3b" stroke-width="1.2" stroke-linecap="round" stroke-linejoin="round"/></svg>
<div class="t" style="left:1109.84px;top:162.00px;font-size:12px;letter-spacing:0.103px;color:#242424;">Editing</div>
<svg class="abs" style="left:1223px;top:86px;" width="30" height="30" viewBox="0 0 30 30"><rect x="1.600" y="1.600" width="27" height="27" fill="#fdf3ec" stroke="#c87244" stroke-width="1.200"/><rect x="5.200" y="5.200" width="8.600" height="8.600" fill="#fff" stroke="#c87244" stroke-width="1.100"/><rect x="16.400" y="5.200" width="8.600" height="8.600" fill="#fff" stroke="#c87244" stroke-width="1.100"/><rect x="5.200" y="16.400" width="8.600" height="8.600" fill="#fff" stroke="#c87244" stroke-width="1.100"/><rect x="16.400" y="16.400" width="8.600" height="8.600" fill="#fff" stroke="#c87244" stroke-width="1.100"/></svg>
<div class="t" style="left:1217.90px;top:122.00px;font-size:12.5px;letter-spacing:-0.173px;color:#242424;">Add-ins</div>
<div class="t" style="left:1218.40px;top:162.00px;font-size:12px;letter-spacing:-0.243px;color:#242424;">Add-ins</div>
<svg class="abs" style="left:1330.40px;top:161.20px" width="10.60" height="6.80"><path d="M1.46 1.46L5.30 5.53L9.14 1.46" fill="none" stroke="#3b3b3b" stroke-width="1.3" stroke-linecap="round" stroke-linejoin="round"/></svg>
<div class="abs" style="left:0px;top:186px;width:101.5px;height:25.5px;background:#fff;border:1px solid #e3e3e3;border-radius:4px"></div>
<div class="t" style="left:7.80px;top:193.00px;font-size:13px;letter-spacing:-0.377px;color:#333;">A29</div>
<svg class="abs" style="left:85.50px;top:197.20px" width="11.40" height="7.00"><path d="M1.46 1.46L5.70 5.73L9.95 1.46" fill="none" stroke="#444" stroke-width="1.3" stroke-linecap="round" stroke-linejoin="round"/></svg>
<div class="abs" style="left:110.8px;top:194.0px;width:2.4000000000000057px;height:2.3999999999999773px;background:#3a3a3a;border-radius:50%"></div>
<div class="abs" style="left:110.8px;top:198.20000000000002px;width:2.4000000000000057px;height:2.3999999999999773px;background:#3a3a3a;border-radius:50%"></div>
<div class="abs" style="left:110.8px;top:202.4px;width:2.4000000000000057px;height:2.3999999999999773px;background:#3a3a3a;border-radius:50%"></div>
<div class="abs" style="left:123px;top:186px;width:72.5px;height:25.5px;background:#fff;border:1px solid #e3e3e3;border-radius:4px"></div>
<svg class="abs" style="left:128px;top:193px;" width="14" height="14" viewBox="0 0 14 14"><path d="M1.3 1.300L12.600 12.300M12.600 1.300L1.300 12.300" stroke="#bdbdbd" stroke-width="1.1"/></svg>
<svg class="abs" style="left:150px;top:193px;" width="19" height="14" viewBox="0 0 19 14"><path d="M1.300 7.600L5.800 12.200L17.400 1.300" fill="none" stroke="#bdbdbd" stroke-width="1.1"/></svg>
<div class="t" style="left:176px;top:190.5px;font-family:'Liberation Serif',serif;font-style:italic;font-size:17.5px;color:#2b2b2b;letter-spacing:0.6px;-webkit-text-stroke:0.35px #2b2b2b">fx</div>
<div class="abs" style="left:200.5px;top:186px;width:1149.5px;height:65.5px;background:#fff;border:1px solid #e3e3e3;border-radius:5px"></div>
<div class="t" style="left:212.34px;top:193.00px;font-size:13px;letter-spacing:0.475px;color:#333;">Total Other Income/Expenses</div>
<svg class="abs" style="left:1333px;top:191px;" width="14" height="10" viewBox="0 0 14 10"><path d="M3.600 8L7.800 3.800L12 8" fill="none" stroke="#333" stroke-width="1.2" stroke-linecap="round" stroke-linejoin="round"/></svg>
<div class="abs" style="left:17px;top:275px;width:1319px;height:399px;background:#fff"></div>
<div class="abs" style="left:18px;top:258.5px;width:272px;height:15.5px;background:#e1e1e1"></div>
<div class="abs" style="left:18px;top:273.5px;width:272px;height:1.5px;background:#217346"></div>
<div class="abs" style="left:290px;top:274px;width:366px;height:1px;background:#e4e8ec"></div>
<div class="abs" style="left:656px;top:274px;width:681px;height:1px;background:#b0b0b0"></div>
<svg class="abs" style="left:6px;top:262px;" width="10" height="10" viewBox="0 0 10 10"><path d="M9 1V9H1Z" fill="#dadada"/></svg>
<div class="abs" style="left:17px;top:257px;width:1px;height:2px;background:#000"></div>
<div class="t" style="left:149.51px;top:261px;font-size:12px;color:#217346">A</div>
<div class="t" style="left:346.33px;top:261px;font-size:12px;color:#3b3b3b">B</div>
<div class="abs" style="left:411px;top:262px;width:1px;height:12px;background:#d8d8d8"></div>
<div class="t" style="left:468.09px;top:261px;font-size:12px;color:#3b3b3b">C</div>
<div class="abs" style="left:533px;top:262px;width:1px;height:12px;background:#d8d8d8"></div>
<div class="t" style="left:589.97px;top:261px;font-size:12px;color:#3b3b3b">D</div>
<div class="abs" style="left:655px;top:262px;width:1px;height:12px;background:#d8d8d8"></div>
<div class="t" style="left:681.77px;top:261px;font-size:12px;color:#3b3b3b">E</div>
<div class="abs" style="left:716px;top:262px;width:1px;height:12px;background:#d8d8d8"></div>
<div class="t" style="left:743.07px;top:261px;font-size:12px;color:#3b3b3b">F</div>
<div class="abs" style="left:777px;top:262px;width:1px;height:12px;background:#d8d8d8"></div>
<div class="t" style="left:803.47px;top:261px;font-size:12px;color:#3b3b3b">G</div>
<div class="abs" style="left:838px;top:262px;width:1px;height:12px;background:#d8d8d8"></div>
<div class="t" style="left:864.65px;top:261px;font-size:12px;color:#3b3b3b">H</div>
<div class="abs" style="left:899px;top:262px;width:1px;height:12px;background:#d8d8d8"></div>
<div class="t" style="left:928.32px;top:261px;font-size:12px;color:#3b3b3b">I</div>
<div class="abs" style="left:960px;top:262px;width:1px;height:12px;background:#d8d8d8"></div>
<div class="t" style="left:988.33px;top:261px;font-size:12px;color:#3b3b3b">J</div>
<div class="abs" style="left:1021px;top:262px;width:1px;height:12px;background:#d8d8d8"></div>
<div class="t" style="left:1047.56px;top:261px;font-size:12px;color:#3b3b3b">K</div>
<div class="abs" style="left:1082px;top:262px;width:1px;height:12px;background:#d8d8d8"></div>
<div class="t" style="left:1109.37px;top:261px;font-size:12px;color:#3b3b3b">L</div>
<div class="abs" style="left:1143px;top:262px;width:1px;height:12px;background:#d8d8d8"></div>
<div class="t" style="left:1168.99px;top:261px;font-size:12px;color:#3b3b3b">M</div>
<div class="abs" style="left:1204px;top:262px;width:1px;height:12px;background:#d8d8d8"></div>
<div class="t" style="left:1230.65px;top:261px;font-size:12px;color:#3b3b3b">N</div>
<div class="abs" style="left:1265px;top:262px;width:1px;height:12px;background:#d8d8d8"></div>
<div class="t" style="left:1291.35px;top:261px;font-size:12px;color:#3b3b3b">O</div>
<div class="abs" style="left:1326px;top:262px;width:1px;height:12px;background:#d8d8d8"></div>
<div class="abs" style="left:716px;top:275px;width:1px;height:399px;background:#dcdcdc"></div>
<div class="abs" style="left:777px;top:275px;width:1px;height:399px;background:#dcdcdc"></div>
<div class="abs" style="left:838px;top:275px;width:1px;height:399px;background:#dcdcdc"></div>
<div class="abs" style="left:899px;top:275px;width:1px;height:399px;background:#dcdcdc"></div>
<div class="abs" style="left:960px;top:275px;width:1px;height:399px;background:#dcdcdc"></div>
<div class="abs" style="left:1021px;top:275px;width:1px;height:399px;background:#dcdcdc"></div>
<div class="abs" style="left:1082px;top:275px;width:1px;height:399px;background:#dcdcdc"></div>
<div class="abs" style="left:1143px;top:275px;width:1px;height:399px;background:#dcdcdc"></div>
<div class="abs" style="left:1204px;top:275px;width:1px;height:399px;background:#dcdcdc"></div>
<div class="abs" style="left:1265px;top:275px;width:1px;height:399px;background:#dcdcdc"></div>
<div class="abs" style="left:1326px;top:275px;width:1px;height:399px;background:#dcdcdc"></div>
<div class="abs" style="left:656px;top:297px;width:680px;height:1px;background:#dcdcdc"></div>
<div class="abs" style="left:656px;top:314px;width:680px;height:1px;background:#dcdcdc"></div>
<div class="abs" style="left:656px;top:331px;width:680px;height:1px;background:#dcdcdc"></div>
<div class="abs" style="left:656px;top:347px;width:680px;height:1px;background:#dcdcdc"></div>
<div class="abs" style="left:656px;top:363px;width:680px;height:1px;background:#dcdcdc"></div>
<div class="abs" style="left:656px;top:379px;width:680px;height:1px;background:#dcdcdc"></div>
<div class="abs" style="left:656px;top:396px;width:680px;height:1px;background:#dcdcdc"></div>
<div class="abs" style="left:656px;top:412px;width:680px;height:1px;background:#dcdcdc"></div>
<div class="abs" style="left:656px;top:429px;width:680px;height:1px;background:#dcdcdc"></div>
<div class="abs" style="left:656px;top:445px;width:680px;height:1px;background:#dcdcdc"></div>
<div class="abs" style="left:656px;top:461px;width:680px;height:1px;background:#dcdcdc"></div>
<div class="abs" style="left:656px;top:478px;width:680px;height:1px;background:#dcdcdc"></div>
<div class="abs" style="left:656px;top:495px;width:680px;height:1px;background:#dcdcdc"></div>
<div class="abs" style="left:656px;top:511px;width:680px;height:1px;background:#dcdcdc"></div>
<div class="abs" style="left:656px;top:527px;width:680px;height:1px;background:#dcdcdc"></div>
<div class="abs" style="left:656px;top:543px;width:680px;height:1px;background:#dcdcdc"></div>
<div class="abs" style="left:656px;top:559px;width:680px;height:1px;background:#dcdcdc"></div>
<div class="abs" style="left:656px;top:575px;width:680px;height:1px;background:#dcdcdc"></div>
<div class="abs" style="left:656px;top:591px;width:680px;height:1px;background:#dcdcdc"></div>
<div class="abs" style="left:656px;top:607px;width:680px;height:1px;background:#dcdcdc"></div>
<div class="abs" style="left:656px;top:623px;width:680px;height:1px;background:#dcdcdc"></div>
<div class="abs" style="left:656px;top:640px;width:680px;height:1px;background:#dcdcdc"></div>
<div class="abs" style="left:656px;top:656px;width:680px;height:1px;background:#dcdcdc"></div>
<div class="abs" style="left:656px;top:672px;width:680px;height:1px;background:#dcdcdc"></div>
<div class="t" style="left:0.90px;top:283px;font-size:12.3px;color:#444">1</div>
<div class="abs" style="left:0px;top:297px;width:17px;height:1px;background:#d8d8d8"></div>
<div class="t" style="left:1.06px;top:301px;font-size:12.3px;color:#444">2</div>
<div class="abs" style="left:0px;top:314px;width:17px;height:1px;background:#d8d8d8"></div>
<div class="t" style="left:1.12px;top:317px;font-size:12.3px;color:#444">3</div>
<div class="abs" style="left:0px;top:331px;width:17px;height:1px;background:#d8d8d8"></div>
<div class="t" style="left:1.12px;top:335px;font-size:12.3px;color:#444">4</div>
<div class="abs" style="left:0px;top:347px;width:17px;height:1px;background:#d8d8d8"></div>
<div class="t" style="left:1.09px;top:350px;font-size:12.3px;color:#444">5</div>
<div class="abs" style="left:0px;top:363px;width:17px;height:1px;background:#d8d8d8"></div>
<div class="t" style="left:1.03px;top:367px;font-size:12.3px;color:#444">6</div>
<div class="abs" style="left:0px;top:379px;width:17px;height:1px;background:#d8d8d8"></div>
<div class="t" style="left:1.06px;top:383px;font-size:12.3px;color:#444">7</div>
<div class="abs" style="left:0px;top:396px;width:17px;height:1px;background:#d8d8d8"></div>
<div class="t" style="left:1.09px;top:400px;font-size:12.3px;color:#444">8</div>
<div class="abs" style="left:0px;top:412px;width:17px;height:1px;background:#d8d8d8"></div>
<div class="t" style="left:1.09px;top:416px;font-size:12.3px;color:#444">9</div>
<div class="abs" style="left:0px;top:429px;width:17px;height:1px;background:#d8d8d8"></div>
<div class="t" style="left:-2.57px;top:433px;font-size:12.3px;color:#444">10</div>
<div class="abs" style="left:0px;top:445px;width:17px;height:1px;background:#d8d8d8"></div>
<div class="t" style="left:-2.05px;top:449px;font-size:12.3px;color:#444">11</div>
<div class="abs" style="left:0px;top:461px;width:17px;height:1px;background:#d8d8d8"></div>
<div class="t" style="left:-2.51px;top:466px;font-size:12.3px;color:#444">12</div>
<div class="abs" style="left:0px;top:478px;width:17px;height:1px;background:#d8d8d8"></div>
<div class="t" style="left:-2.54px;top:482px;font-size:12.3px;color:#444">13</div>
<div class="abs" style="left:0px;top:495px;width:17px;height:1px;background:#d8d8d8"></div>
<div class="t" style="left:-2.63px;top:498px;font-size:12.3px;color:#444">14</div>
<div class="abs" style="left:0px;top:511px;width:17px;height:1px;background:#d8d8d8"></div>
<div class="t" style="left:-2.54px;top:514px;font-size:12.3px;color:#444">15</div>
<div class="abs" style="left:0px;top:527px;width:17px;height:1px;background:#d8d8d8"></div>
<div class="t" style="left:-2.54px;top:530px;font-size:12.3px;color:#444">16</div>
<div class="abs" style="left:0px;top:543px;width:17px;height:1px;background:#d8d8d8"></div>
<div class="t" style="left:-2.51px;top:547px;font-size:12.3px;color:#444">17</div>
<div class="abs" style="left:0px;top:559px;width:17px;height:1px;background:#d8d8d8"></div>
<div class="t" style="left:-2.54px;top:562px;font-size:12.3px;color:#444">18</div>
<div class="abs" style="left:0px;top:575px;width:17px;height:1px;background:#d8d8d8"></div>
<div class="t" style="left:-2.51px;top:579px;font-size:12.3px;color:#444">19</div>
<div class="abs" style="left:0px;top:591px;width:17px;height:1px;background:#d8d8d8"></div>
<div class="t" style="left:-2.42px;top:595px;font-size:12.3px;color:#444">20</div>
<div class="abs" style="left:0px;top:607px;width:17px;height:1px;background:#d8d8d8"></div>
<div class="t" style="left:-2.36px;top:611px;font-size:12.3px;color:#444">21</div>
<div class="abs" style="left:0px;top:623px;width:17px;height:1px;background:#d8d8d8"></div>
<div class="t" style="left:-2.36px;top:627px;font-size:12.3px;color:#444">22</div>
<div class="abs" style="left:0px;top:640px;width:17px;height:1px;background:#d8d8d8"></div>
<div class="t" style="left:-2.39px;top:643px;font-size:12.3px;color:#444">23</div>
<div class="abs" style="left:0px;top:656px;width:17px;height:1px;background:#d8d8d8"></div>
<div class="t" style="left:-2.48px;top:660px;font-size:12.3px;color:#444">24</div>
<div class="abs" style="left:0px;top:672px;width:17px;height:1px;background:#d8d8d8"></div>
<div class="abs" style="left:18px;top:275px;width:637px;height:22px;background:#1f4e79"></div>
<div class="abs" style="left:18px;top:315px;width:637px;height:16px;background:#d6dce5"></div>
<div class="abs" style="left:18px;top:413px;width:637px;height:16px;background:#d6dce5"></div>
<div class="abs" style="left:18px;top:479px;width:637px;height:16px;background:#d6dce5"></div>
<div class="abs" style="left:18px;top:380px;width:637px;height:16px;background:#e2efda"></div>
<div class="abs" style="left:18px;top:624px;width:637px;height:16px;background:#e2efda"></div>
<div class="abs" style="left:18px;top:446px;width:637px;height:15px;background:#fff2cc"></div>
<div class="abs" style="left:18px;top:657px;width:637px;height:15px;background:#fff2cc"></div>
<div class="abs" style="left:17px;top:297px;width:639px;height:1px;background:#000"></div>
<div class="abs" style="left:17px;top:314px;width:639px;height:1px;background:#000"></div>
<div class="abs" style="left:17px;top:331px;width:639px;height:1px;background:#000"></div>
<div class="abs" style="left:17px;top:347px;width:639px;height:1px;background:#000"></div>
<div class="abs" style="left:17px;top:363px;width:639px;height:1px;background:#000"></div>
<div class="abs" style="left:17px;top:379px;width:639px;height:1px;background:#000"></div>
<div class="abs" style="left:17px;top:396px;width:639px;height:1px;background:#000"></div>
<div class="abs" style="left:17px;top:412px;width:639px;height:1px;background:#000"></div>
<div class="abs" style="left:17px;top:429px;width:639px;height:1px;background:#000"></div>
<div class="abs" style="left:17px;top:445px;width:639px;height:1px;background:#000"></div>
<div class="abs" style="left:17px;top:461px;width:639px;height:1px;background:#000"></div>
<div class="abs" style="left:17px;top:478px;width:639px;height:1px;background:#000"></div>
<div class="abs" style="left:17px;top:495px;width:639px;height:1px;background:#000"></div>
<div class="abs" style="left:17px;top:511px;width:639px;height:1px;background:#000"></div>
<div class="abs" style="left:17px;top:527px;width:639px;height:1px;background:#000"></div>
<div class="abs" style="left:17px;top:543px;width:639px;height:1px;background:#000"></div>
<div class="abs" style="left:17px;top:559px;width:639px;height:1px;background:#000"></div>
<div class="abs" style="left:17px;top:575px;width:639px;height:1px;background:#000"></div>
<div class="abs" style="left:17px;top:591px;width:639px;height:1px;background:#000"></div>
<div class="abs" style="left:17px;top:607px;width:639px;height:1px;background:#000"></div>
<div class="abs" style="left:17px;top:623px;width:639px;height:1px;background:#000"></div>
<div class="abs" style="left:17px;top:640px;width:639px;height:1px;background:#000"></div>
<div class="abs" style="left:17px;top:656px;width:639px;height:1px;background:#000"></div>
<div class="abs" style="left:17px;top:672px;width:639px;height:1px;background:#000"></div>
<div class="abs" style="left:289px;top:297px;width:1px;height:376px;background:#000"></div>
<div class="abs" style="left:411px;top:297px;width:1px;height:376px;background:#000"></div>
<div class="abs" style="left:533px;top:297px;width:1px;height:376px;background:#000"></div>
<div class="abs" style="left:17px;top:297px;width:1px;height:376px;background:#000"></div>
<div class="abs" style="left:17px;top:275px;width:1px;height:22px;background:#1f4e79"></div>
<div class="abs" style="left:655px;top:297px;width:1px;height:376px;background:#000"></div>
<div class="abs" style="left:655px;top:275px;width:1px;height:22px;background:#1f4e79"></div>
<div class="t" style="left:242.63px;top:278px;font-size:18px;font-weight:bold;color:#fff;letter-spacing:0.282px;word-spacing:-1.05px">INCOME STATEMENT</div>
<div class="t" style="left:100.62px;top:301.00px;font-size:12px;font-weight:bold;letter-spacing:-0.128px;color:#000;">For the Year Ended</div>
<div class="t" style="left:333.52px;top:301.00px;font-size:12px;font-weight:bold;letter-spacing:-0.192px;color:#000;">Year 1</div>
<div class="t" style="left:455.52px;top:301.00px;font-size:12px;font-weight:bold;letter-spacing:-0.168px;color:#000;">Year 2</div>
<div class="t" style="left:577.52px;top:301.00px;font-size:12px;font-weight:bold;letter-spacing:-0.168px;color:#000;">Year 3</div>
<div class="t" style="left:19.99px;top:318.00px;font-size:12px;font-weight:bold;color:#000;transform:scaleX(0.9117);transform-origin:0 0;">REVENUE</div>
<div class="t" style="left:20.05px;top:335.00px;font-size:12.3px;letter-spacing:0.013px;color:#000;">Sales Revenue</div>
<div class="t" style="left:296.58px;top:335.00px;font-size:12.3px;letter-spacing:0px;color:#000;">$</div>
<div class="t" style="left:343.07px;top:335.00px;font-size:12.3px;color:#000;">500,000.00</div>
<div class="t" style="left:418.58px;top:335.00px;font-size:12.3px;letter-spacing:0px;color:#000;">$</div>
<div class="t" style="left:465.07px;top:335.00px;font-size:12.3px;color:#000;">575,000.00</div>
<div class="t" style="left:540.58px;top:335.00px;font-size:12.3px;letter-spacing:0px;color:#000;">$</div>
<div class="t" style="left:587.07px;top:335.00px;font-size:12.3px;color:#000;">661,250.00</div>
<div class="t" style="left:20.05px;top:351.00px;font-size:12.3px;letter-spacing:-0.144px;color:#000;">Service Revenue</div>
<div class="t" style="left:296.58px;top:351.00px;font-size:12.3px;letter-spacing:0px;color:#000;">$</div>
<div class="t" style="left:343.07px;top:351.00px;font-size:12.3px;color:#000;">150,000.00</div>
<div class="t" style="left:418.58px;top:351.00px;font-size:12.3px;letter-spacing:0px;color:#000;">$</div>
<div class="t" style="left:465.07px;top:351.00px;font-size:12.3px;color:#000;">172,500.00</div>
<div class="t" style="left:540.58px;top:351.00px;font-size:12.3px;letter-spacing:0px;color:#000;">$</div>
<div class="t" style="left:587.07px;top:351.00px;font-size:12.3px;color:#000;">198,375.00</div>
<div class="t" style="left:20.05px;top:367.00px;font-size:12.3px;letter-spacing:-0.137px;color:#000;">Other Revenue</div>
<div class="t" style="left:296.58px;top:367.00px;font-size:12.3px;letter-spacing:0px;color:#000;">$</div>
<div class="t" style="left:349.90px;top:367.00px;font-size:12.3px;color:#000;">25,000.00</div>
<div class="t" style="left:418.58px;top:367.00px;font-size:12.3px;letter-spacing:0px;color:#000;">$</div>
<div class="t" style="left:471.90px;top:367.00px;font-size:12.3px;color:#000;">28,750.00</div>
<div class="t" style="left:540.58px;top:367.00px;font-size:12.3px;letter-spacing:0px;color:#000;">$</div>
<div class="t" style="left:593.90px;top:367.00px;font-size:12.3px;color:#000;">33,063.00</div>
<div class="t" style="left:20.58px;top:383.00px;font-size:12px;font-weight:bold;letter-spacing:-0.137px;color:#000;">Total Revenue</div>
<div class="t" style="left:296.58px;top:383.00px;font-size:12.3px;letter-spacing:0px;color:#000;">$</div>
<div class="t" style="left:343.07px;top:383.00px;font-size:12.3px;color:#000;">675,000.00</div>
<div class="t" style="left:418.58px;top:383.00px;font-size:12.3px;letter-spacing:0px;color:#000;">$</div>
<div class="t" style="left:465.07px;top:383.00px;font-size:12.3px;color:#000;">776,250.00</div>
<div class="t" style="left:540.58px;top:383.00px;font-size:12.3px;letter-spacing:0px;color:#000;">$</div>
<div class="t" style="left:587.07px;top:383.00px;font-size:12.3px;color:#000;">892,688.00</div>
<div class="t" style="left:20.25px;top:416.00px;font-size:12px;font-weight:bold;color:#000;transform:scaleX(0.9409);transform-origin:0 0;">COST OF GOODS SOLD</div>
<div class="t" style="left:19.99px;top:433.00px;font-size:12.3px;letter-spacing:0.054px;color:#000;">Cost of Goods Sold</div>
<div class="t" style="left:296.58px;top:433.00px;font-size:12.3px;letter-spacing:0px;color:#000;">$</div>
<div class="t" style="left:343.07px;top:433.00px;font-size:12.3px;color:#000;">300,000.00</div>
<div class="t" style="left:418.58px;top:433.00px;font-size:12.3px;letter-spacing:0px;color:#000;">$</div>
<div class="t" style="left:465.07px;top:433.00px;font-size:12.3px;color:#000;">340,000.00</div>
<div class="t" style="left:540.58px;top:433.00px;font-size:12.3px;letter-spacing:0px;color:#000;">$</div>
<div class="t" style="left:587.07px;top:433.00px;font-size:12.3px;color:#000;">385,000.00</div>
<div class="t" style="left:20.22px;top:449.00px;font-size:12px;font-weight:bold;letter-spacing:-0.124px;color:#000;">Gross Profit</div>
<div class="t" style="left:296.58px;top:449.00px;font-size:12.3px;letter-spacing:0px;color:#000;">$</div>
<div class="t" style="left:343.07px;top:449.00px;font-size:12.3px;color:#000;">375,000.00</div>
<div class="t" style="left:418.58px;top:449.00px;font-size:12.3px;letter-spacing:0px;color:#000;">$</div>
<div class="t" style="left:465.07px;top:449.00px;font-size:12.3px;color:#000;">436,250.00</div>
<div class="t" style="left:540.58px;top:449.00px;font-size:12.3px;letter-spacing:0px;color:#000;">$</div>
<div class="t" style="left:587.07px;top:449.00px;font-size:12.3px;color:#000;">507,688.00</div>
<div class="t" style="left:20.25px;top:482.00px;font-size:12px;font-weight:bold;color:#000;transform:scaleX(0.9362);transform-origin:0 0;">OPERATING EXPENSES</div>
<div class="t" style="left:20.05px;top:499.00px;font-size:12.3px;letter-spacing:0.086px;color:#000;">Salaries &amp; Wages</div>
<div class="t" style="left:296.58px;top:499.00px;font-size:12.3px;letter-spacing:0px;color:#000;">$</div>
<div class="t" style="left:349.90px;top:499.00px;font-size:12.3px;color:#000;">80,000.00</div>
<div class="t" style="left:418.58px;top:499.00px;font-size:12.3px;letter-spacing:0px;color:#000;">$</div>
<div class="t" style="left:471.90px;top:499.00px;font-size:12.3px;color:#000;">88,000.00</div>
<div class="t" style="left:540.58px;top:499.00px;font-size:12.3px;letter-spacing:0px;color:#000;">$</div>
<div class="t" style="left:593.90px;top:499.00px;font-size:12.3px;color:#000;">96,800.00</div>
<div class="t" style="left:19.62px;top:515.00px;font-size:12.3px;letter-spacing:-0.006px;color:#000;">Rent Expense</div>
<div class="t" style="left:296.58px;top:515.00px;font-size:12.3px;letter-spacing:0px;color:#000;">$</div>
<div class="t" style="left:349.90px;top:515.00px;font-size:12.3px;color:#000;">24,000.00</div>
<div class="t" style="left:418.58px;top:515.00px;font-size:12.3px;letter-spacing:0px;color:#000;">$</div>
<div class="t" style="left:471.90px;top:515.00px;font-size:12.3px;color:#000;">24,000.00</div>
<div class="t" style="left:540.58px;top:515.00px;font-size:12.3px;letter-spacing:0px;color:#000;">$</div>
<div class="t" style="left:593.90px;top:515.00px;font-size:12.3px;color:#000;">25,200.00</div>
<div class="t" style="left:19.68px;top:531.00px;font-size:12.3px;letter-spacing:0.076px;color:#000;">Utilities Expense</div>
<div class="t" style="left:296.58px;top:531.00px;font-size:12.3px;letter-spacing:0px;color:#000;">$</div>
<div class="t" style="left:356.78px;top:531.00px;font-size:12.3px;color:#000;">6,000.00</div>
<div class="t" style="left:418.58px;top:531.00px;font-size:12.3px;letter-spacing:0px;color:#000;">$</div>
<div class="t" style="left:478.78px;top:531.00px;font-size:12.3px;color:#000;">6,300.00</div>
<div class="t" style="left:540.58px;top:531.00px;font-size:12.3px;letter-spacing:0px;color:#000;">$</div>
<div class="t" style="left:600.78px;top:531.00px;font-size:12.3px;color:#000;">6,615.00</div>
<div class="t" style="left:19.62px;top:547.00px;font-size:12.3px;letter-spacing:0.059px;color:#000;">Depreciation Expense</div>
<div class="t" style="left:296.58px;top:547.00px;font-size:12.3px;letter-spacing:0px;color:#000;">$</div>
<div class="t" style="left:349.90px;top:547.00px;font-size:12.3px;color:#000;">15,000.00</div>
<div class="t" style="left:418.58px;top:547.00px;font-size:12.3px;letter-spacing:0px;color:#000;">$</div>
<div class="t" style="left:471.90px;top:547.00px;font-size:12.3px;color:#000;">15,000.00</div>
<div class="t" style="left:540.58px;top:547.00px;font-size:12.3px;letter-spacing:0px;color:#000;">$</div>
<div class="t" style="left:593.90px;top:547.00px;font-size:12.3px;color:#000;">15,000.00</div>
<div class="t" style="left:19.62px;top:563.00px;font-size:12.3px;letter-spacing:-0.072px;color:#000;">Marketing &amp; Advertising</div>
<div class="t" style="left:296.58px;top:563.00px;font-size:12.3px;letter-spacing:0px;color:#000;">$</div>
<div class="t" style="left:349.90px;top:563.00px;font-size:12.3px;color:#000;">20,000.00</div>
<div class="t" style="left:418.58px;top:563.00px;font-size:12.3px;letter-spacing:0px;color:#000;">$</div>
<div class="t" style="left:471.90px;top:563.00px;font-size:12.3px;color:#000;">23,000.00</div>
<div class="t" style="left:540.58px;top:563.00px;font-size:12.3px;letter-spacing:0px;color:#000;">$</div>
<div class="t" style="left:593.90px;top:563.00px;font-size:12.3px;color:#000;">26,450.00</div>
<div class="t" style="left:19.49px;top:579.00px;font-size:12.3px;letter-spacing:0.057px;color:#000;">Insurance Expense</div>
<div class="t" style="left:296.58px;top:579.00px;font-size:12.3px;letter-spacing:0px;color:#000;">$</div>
<div class="t" style="left:356.78px;top:579.00px;font-size:12.3px;color:#000;">8,000.00</div>
<div class="t" style="left:418.58px;top:579.00px;font-size:12.3px;letter-spacing:0px;color:#000;">$</div>
<div class="t" style="left:478.78px;top:579.00px;font-size:12.3px;color:#000;">8,400.00</div>
<div class="t" style="left:540.58px;top:579.00px;font-size:12.3px;letter-spacing:0px;color:#000;">$</div>
<div class="t" style="left:600.78px;top:579.00px;font-size:12.3px;color:#000;">8,820.00</div>
<div class="t" style="left:20.05px;top:595.00px;font-size:12.3px;letter-spacing:0.011px;color:#000;">Office Supplies</div>
<div class="t" style="left:296.58px;top:595.00px;font-size:12.3px;letter-spacing:0px;color:#000;">$</div>
<div class="t" style="left:356.78px;top:595.00px;font-size:12.3px;color:#000;">3,000.00</div>
<div class="t" style="left:418.58px;top:595.00px;font-size:12.3px;letter-spacing:0px;color:#000;">$</div>
<div class="t" style="left:478.78px;top:595.00px;font-size:12.3px;color:#000;">3,150.00</div>
<div class="t" style="left:540.58px;top:595.00px;font-size:12.3px;letter-spacing:0px;color:#000;">$</div>
<div class="t" style="left:600.78px;top:595.00px;font-size:12.3px;color:#000;">3,308.00</div>
<div class="t" style="left:19.62px;top:611.00px;font-size:12.3px;letter-spacing:0.160px;color:#000;">Professional Fees</div>
<div class="t" style="left:296.58px;top:611.00px;font-size:12.3px;letter-spacing:0px;color:#000;">$</div>
<div class="t" style="left:356.78px;top:611.00px;font-size:12.3px;color:#000;">5,000.00</div>
<div class="t" style="left:418.58px;top:611.00px;font-size:12.3px;letter-spacing:0px;color:#000;">$</div>
<div class="t" style="left:478.78px;top:611.00px;font-size:12.3px;color:#000;">5,250.00</div>
<div class="t" style="left:540.58px;top:611.00px;font-size:12.3px;letter-spacing:0px;color:#000;">$</div>
<div class="t" style="left:600.78px;top:611.00px;font-size:12.3px;color:#000;">5,513.00</div>
<div class="t" style="left:20.58px;top:627.00px;font-size:12px;font-weight:bold;letter-spacing:-0.082px;color:#000;">Total Operating Expenses</div>
<div class="t" style="left:296.58px;top:627.00px;font-size:12.3px;letter-spacing:0px;color:#000;">$</div>
<div class="t" style="left:343.07px;top:627.00px;font-size:12.3px;color:#000;">161,000.00</div>
<div class="t" style="left:418.58px;top:627.00px;font-size:12.3px;letter-spacing:0px;color:#000;">$</div>
<div class="t" style="left:465.07px;top:627.00px;font-size:12.3px;color:#000;">173,100.00</div>
<div class="t" style="left:540.58px;top:627.00px;font-size:12.3px;letter-spacing:0px;color:#000;">$</div>
<div class="t" style="left:587.07px;top:627.00px;font-size:12.3px;color:#000;">187,706.00</div>
<div class="t" style="left:20.22px;top:660.00px;font-size:12px;font-weight:bold;letter-spacing:-0.084px;color:#000;">Operating Income</div>
<div class="t" style="left:296.58px;top:660.00px;font-size:12.3px;letter-spacing:0px;color:#000;">$</div>
<div class="t" style="left:343.07px;top:660.00px;font-size:12.3px;color:#000;">214,000.00</div>
<div class="t" style="left:418.58px;top:660.00px;font-size:12.3px;letter-spacing:0px;color:#000;">$</div>
<div class="t" style="left:465.07px;top:660.00px;font-size:12.3px;color:#000;">263,150.00</div>
<div class="t" style="left:540.58px;top:660.00px;font-size:12.3px;letter-spacing:0px;color:#000;">$</div>
<div class="t" style="left:587.07px;top:660.00px;font-size:12.3px;color:#000;">319,982.00</div>
<div class="abs" style="left:1336px;top:274px;width:1px;height:400px;background:#c8c8c8"></div>
<div class="abs" style="left:656px;top:673.5px;width:681px;height:1.0px;background:#cdcdcd"></div>
<div class="abs" style="left:1337px;top:258px;width:12px;height:417px;background:#f3f3f3"></div>
<svg class="abs" style="left:1342px;top:263px;" width="8" height="9" viewBox="0 0 8 9"><path d="M1.200 7.500L7.200 1V7.500Z" fill="#6e6e6e"/><path d="M7 1V7.500H8V1Z" fill="#6e6e6e"/></svg>
<div class="abs" style="left:1343.2px;top:276px;width:12.799999999999955px;height:270.70000000000005px;background:#737373;border-radius:3.500px"></div>
<svg class="abs" style="left:1342px;top:664px;" width="8" height="9" viewBox="0 0 8 9"><path d="M1.200 1.400H8V7.800H7Z" fill="#6e6e6e"/></svg>
<div class="abs" style="left:0px;top:674.5px;width:1349px;height:33.5px;background:#f0f0f0"></div>
<div class="abs" style="left:0px;top:704.5px;width:1349px;height:3.5px;background:#f6f6f6"></div>
<div class="abs" style="left:1058px;top:706px;width:40px;height:4px;background:#cfcfcf;border-radius:2px"></div>
<svg class="abs" style="left:19px;top:683px;" width="10" height="13" viewBox="0 0 10 13"><path d="M7.600 1.800L2.200 6.500L7.600 11.200" fill="none" stroke="#a6a6a6" stroke-width="1.4" stroke-linecap="round" stroke-linejoin="round"/></svg>
<svg class="abs" style="left:51px;top:683px;" width="10" height="13" viewBox="0 0 10 13"><path d="M2.200 1.800L7.600 6.500L2.200 11.200" fill="none" stroke="#7a7a7a" stroke-width="1.4" stroke-linecap="round" stroke-linejoin="round"/></svg>
<div class="abs" style="left:108px;top:674px;width:132px;height:26.5px;background:#fff;border-radius:0 0 6px 6px;box-shadow:0 0 2px rgba(0,0,0,.12)"></div>
<div class="t" style="left:114.93px;top:681.00px;font-size:13px;letter-spacing:0.772px;color:#2b2b2b;-webkit-text-stroke:0.35px #2b2b2b;">Income Statement</div>
<div class="abs" style="left:116px;top:696.7px;width:116px;height:2.2999999999999545px;background:#1e6e50;border-radius:1px"></div>
<div class="abs" style="left:244.0px;top:683px;width:1.0px;height:14.5px;background:#d0d0d0"></div>
<div class="abs" style="left:357.0px;top:683px;width:1.0px;height:14.5px;background:#d0d0d0"></div>
<div class="abs" style="left:515.0px;top:683px;width:1.0px;height:14.5px;background:#d0d0d0"></div>
<div class="t" style="left:257.36px;top:683.00px;font-size:13px;letter-spacing:0.128px;color:#333;">Balance Sheet</div>
<div class="t" style="left:371.35px;top:683.00px;font-size:13px;letter-spacing:0.308px;color:#333;">Cash Flow Statement</div>
<div class="t" style="left:528.96px;top:683.00px;font-size:13px;letter-spacing:0.287px;color:#333;">Financial Ratios</div>
<svg class="abs" style="left:681px;top:683px;" width="12" height="12" viewBox="0 0 12 12"><path d="M6 1.500V10.500M1.500 6H10.500" stroke="#444" stroke-width="1.1"/></svg>
<div class="abs" style="left:813px;top:684.6px;width:2px;height:1.7999999999999545px;background:#444;border-radius:50%"></div>
<div class="abs" style="left:813px;top:688.8000000000001px;width:2px;height:1.7999999999999545px;background:#444;border-radius:50%"></div>
<div class="abs" style="left:813px;top:693.0px;width:2px;height:1.7999999999999545px;background:#444;border-radius:50%"></div>
<svg class="abs" style="left:834px;top:684px;" width="8" height="10" viewBox="0 0 8 10"><path d="M7 0.500V9.500L1 5Z" fill="#6b6b6b"/></svg>
<div class="abs" style="left:846px;top:684.5px;width:444px;height:9.0px;background:#737373;border-radius:4.5px"></div>
<svg class="abs" style="left:1326.5px;top:684.5px;" width="8" height="10" viewBox="0 0 8 10"><path d="M0.800 0.800V9.200L7.400 5Z" fill="#6b6b6b"/></svg>
<div class="abs" style="left:0;top:0;width:1349px;height:708px;opacity:0.55;pointer-events:none">
<div id="wm1" class="t" dir="rtl" style="left:592px;top:621px;font-family:'DejaVu Sans',sans-serif;font-weight:bold;font-size:54px;color:#dcdcdc;-webkit-text-stroke:3.5px #dcdcdc;">نفذلي</div>
<div id="wm2" class="t" style="left:598px;top:680px;font-size:27.2px;font-weight:bold;color:#dcdcdc;-webkit-text-stroke:0.6px #dcdcdc;">nafezly.com</div>
</div>
</body></html>
